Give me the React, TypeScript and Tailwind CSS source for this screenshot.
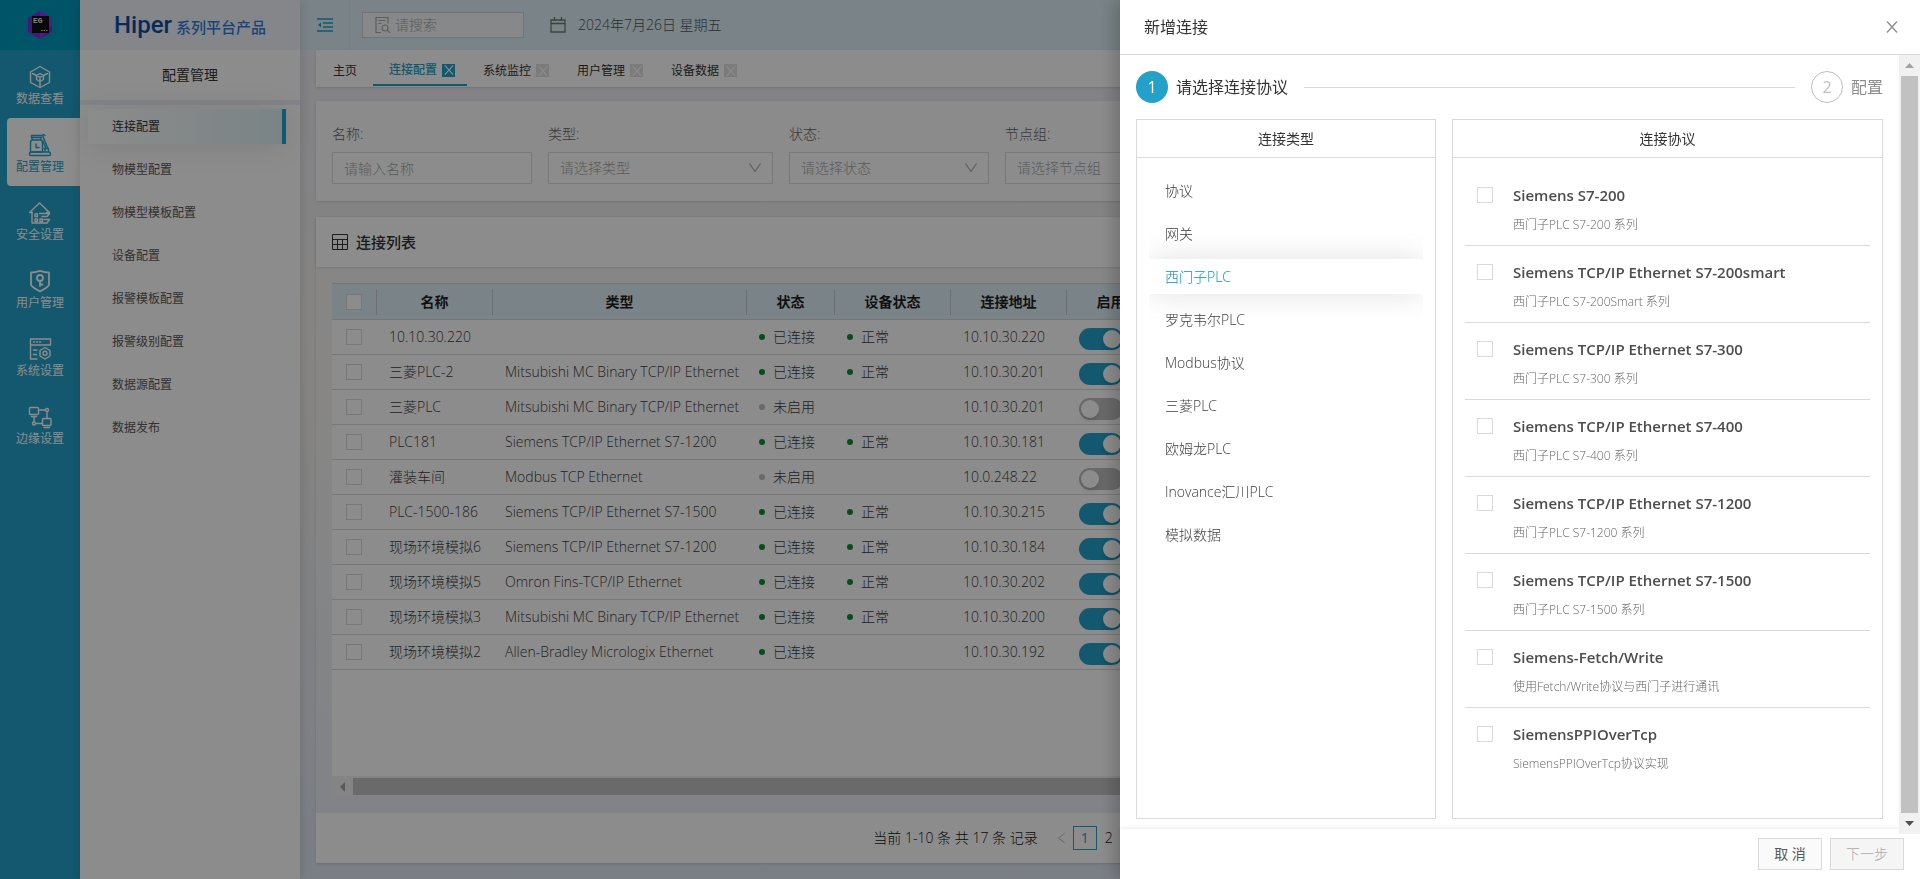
import type { ReactNode } from "react";

type Row = {
  name: string;
  type: string;
  status: string;
  device: string;
  address: string;
  enabled: boolean;
};

const rows: Row[] = [
  { name: "10.10.30.220", type: "", status: "已连接", device: "正常", address: "10.10.30.220", enabled: true },
  { name: "三菱PLC-2", type: "Mitsubishi MC Binary TCP/IP Ethernet", status: "已连接", device: "正常", address: "10.10.30.201", enabled: true },
  { name: "三菱PLC", type: "Mitsubishi MC Binary TCP/IP Ethernet", status: "未启用", device: "", address: "10.10.30.201", enabled: false },
  { name: "PLC181", type: "Siemens TCP/IP Ethernet S7-1200", status: "已连接", device: "正常", address: "10.10.30.181", enabled: true },
  { name: "灌装车间", type: "Modbus TCP Ethernet", status: "未启用", device: "", address: "10.0.248.22", enabled: false },
  { name: "PLC-1500-186", type: "Siemens TCP/IP Ethernet S7-1500", status: "已连接", device: "正常", address: "10.10.30.215", enabled: true },
  { name: "现场环境模拟6", type: "Siemens TCP/IP Ethernet S7-1200", status: "已连接", device: "正常", address: "10.10.30.184", enabled: true },
  { name: "现场环境模拟5", type: "Omron Fins-TCP/IP Ethernet", status: "已连接", device: "正常", address: "10.10.30.202", enabled: true },
  { name: "现场环境模拟3", type: "Mitsubishi MC Binary TCP/IP Ethernet", status: "已连接", device: "正常", address: "10.10.30.200", enabled: true },
  { name: "现场环境模拟2", type: "Allen-Bradley Micrologix Ethernet", status: "已连接", device: "", address: "10.10.30.192", enabled: true },
];

const menu = [
  "连接配置",
  "物模型配置",
  "物模型模板配置",
  "设备配置",
  "报警模板配置",
  "报警级别配置",
  "数据源配置",
  "数据发布",
];

const tabs = ["连接配置", "系统监控", "用户管理", "设备数据"];

const types = [
  "协议",
  "网关",
  "西门子PLC",
  "罗克韦尔PLC",
  "Modbus协议",
  "三菱PLC",
  "欧姆龙PLC",
  "Inovance汇川PLC",
  "模拟数据",
];

const protocols = [
  ["Siemens S7-200", "西门子PLC S7-200 系列"],
  ["Siemens TCP/IP Ethernet S7-200smart", "西门子PLC S7-200Smart 系列"],
  ["Siemens TCP/IP Ethernet S7-300", "西门子PLC S7-300 系列"],
  ["Siemens TCP/IP Ethernet S7-400", "西门子PLC S7-400 系列"],
  ["Siemens TCP/IP Ethernet S7-1200", "西门子PLC S7-1200 系列"],
  ["Siemens TCP/IP Ethernet S7-1500", "西门子PLC S7-1500 系列"],
  ["Siemens-Fetch/Write", "使用Fetch/Write协议与西门子进行通讯"],
  ["SiemensPPIOverTcp", "SiemensPPIOverTcp协议实现"],
];

function RailIcon({ children }: { children: ReactNode }) {
  return (
    <svg
      viewBox="0 0 24 24"
      className="size-6"
      fill="none"
      stroke="currentColor"
      strokeWidth="1.4"
      strokeLinejoin="round"
      strokeLinecap="round"
    >
      {children}
    </svg>
  );
}

const rail = [
  {
    label: "数据查看",
    icon: (
      <RailIcon>
        <path d="M12 1.500 21.500 7v10.500L12 22.500 2.500 17.500V7z" />
        <path d="M12 8.500 15.500 10.500v4L12 16.500 8.500 14.500v-4zM8.500 10.500 12 12.500l3.500-2M12 12.500v9.500M8.500 10.500 4.500 8.500M15.500 10.500l4-2" />
      </RailIcon>
    ),
  },
  {
    label: "配置管理",
    icon: (
      <RailIcon>
        <path d="M3.500 4.500V2.500h11l1-1 1.500 1M3.500 4.500h10M4 4.500v2.500M13 4.500V7M2.500 9.500C2.500 8 3 7 4.500 7h8c1.500 0 2 1 2 2.500V19h-12zM8 11v3.500h3" />
        <path d="M15 3.500 20.500 17v2M14.500 7.500l3 6.500M16 15.500h4.500M1.500 21c0-1.500.5-2 2-2h17c1.500 0 2 .5 2 2s-.5 1.500-1.500 1.500H3c-1 0-1.500 0-1.500-1.500zM17 16v2.500" />
      </RailIcon>
    ),
  },
  {
    label: "安全设置",
    icon: (
      <RailIcon>
        <path d="M4.500 11.500H1.500L11.500 2l10 9.500h-3M4 12v10h15l2.500-3.500h-5.500M11.500 12.500h10L19 15.500h-5" />
        <path d="M7 13h2.500v2.500H7zM7 18h2.500v2.500H7zM12 18h2.500v2.500H12z" />
      </RailIcon>
    ),
  },
  {
    label: "用户管理",
    icon: (
      <RailIcon>
        <path d="M12 1.800c3 1 6 1.700 9 1.700v12c0 2.500-5 4.500-9 7-4-2.500-9-4.500-9-7v-12c3 0 6-.7 9-1.700z" strokeWidth="1.800" />
        <circle cx="12" cy="9" r="3" strokeWidth="1.800" />
        <path d="M12 12v5M12 15.500h2.500" strokeWidth="1.800" />
      </RailIcon>
    ),
  },
  {
    label: "系统设置",
    icon: (
      <RailIcon>
        <path d="M9 22H2.500V2h20v6h-20M5.500 5h1M8.500 5h1M11.500 5h1M5.500 13h3.500M5.500 17.500h3" />
        <path d="m17 10.500 5 3v5.500l-5 3-5-3v-5.500z" />
        <circle cx="17" cy="16.200" r="2" />
      </RailIcon>
    ),
  },
  {
    label: "边缘设置",
    icon: (
      <RailIcon>
        <rect x="1.500" y="2.500" width="9" height="7" rx="1" />
        <rect x="14.500" y="13.500" width="8.500" height="7" rx="1" />
        <path d="M3.500 11.500h5M10.500 5h7M6 11.500V17M8 18.500h6.500M19 7v6.500M16 22.500h5.500" />
        <circle cx="19" cy="5" r="1.500" />
        <circle cx="6" cy="18.500" r="1.500" />
      </RailIcon>
    ),
  },
];

function Cross({ className }: { className: string }) {
  return (
    <svg viewBox="0 0 12 12" className={className} fill="none" stroke="currentColor" strokeWidth="1.300">
      <path d="M1 .5 11 11.500M11 .5 1 11.500" />
    </svg>
  );
}

function Check({ label }: { label: string }) {
  return (
    <input
      type="checkbox"
      aria-label={label}
      className="block size-4 shrink-0 appearance-none border border-[#d9d9d9] bg-white"
    />
  );
}

function Filter({ id, label, hint, width, select }: { id: string; label: string; hint: string; width: string; select?: boolean }) {
  const box = "h-8 w-full appearance-none border border-[#d9d9d9] bg-white px-[11px] text-sm outline-none";
  return (
    <div className={width}>
      <label htmlFor={id} className="mb-2 block text-sm leading-5 text-[#666]">
        {label}:
      </label>
      {select ? (
        <div className="relative">
          <select id={id} className={`${box} text-[#a6a6a6]`}>
            <option>{hint}</option>
          </select>
          <svg viewBox="0 0 12 10" className="absolute right-3 top-[11px] h-2.5 w-3 text-[#aaa]" fill="none" stroke="currentColor" strokeWidth="1.200">
            <path d="m.5.500 5.500 8L11.500.500" />
          </svg>
        </div>
      ) : (
        <input id={id} placeholder={hint} className={`${box} placeholder:text-[#a6a6a6]`} />
      )}
    </div>
  );
}

function Status({ text }: { text: string }) {
  if (!text) return null;
  return (
    <span className="flex items-center gap-2">
      <i className={`size-1.5 rounded-full ${text === "未启用" ? "bg-[#bfbfbf]" : "bg-[#128a32]"}`} />
      {text}
    </span>
  );
}

function Rail() {
  return (
    <nav className="flex w-20 shrink-0 flex-col bg-[#23a1c9] text-white">
      <div className="flex h-[50px] items-center justify-center bg-[#0099bd]">
        <svg viewBox="0 0 26 28" className="h-7 w-[26px]">
          <path d="M13 0 25 7v14l-12 7L1 21V7z" fill="#7d2be0" />
          <path d="M13 0 25 7v7L13 28z" fill="#9a35f2" />
          <rect x="5" y="5" width="17" height="17" fill="#111" />
          <text x="6" y="12" fontSize="8" fontWeight="700" fontFamily="Liberation Mono" fill="#eee">EG</text>
          <path d="M14 19.500h1.500M16.500 19.500H18M19 19.500h1.500" stroke="#ddd" />
        </svg>
      </div>
      {rail.map((item, i) => (
        <a
          key={item.label}
          href="#"
          className={
            i === 1
              ? "ml-[7px] flex h-[68px] flex-col items-center rounded-l bg-white pr-[7px] pt-[15px] text-[#23a1c9]"
              : "flex h-[68px] flex-col items-center pt-[15px]"
          }
        >
          {item.icon}
          <span className="mt-0.5 text-xs font-normal leading-4">{item.label}</span>
        </a>
      ))}
    </nav>
  );
}

function Sidebar() {
  return (
    <aside className="z-10 flex w-[220px] shrink-0 flex-col bg-white shadow-[0_0_10px_rgba(0,0,0,0.15)]">
      <div className="flex h-[50px] items-center justify-center gap-1 bg-[#f1f4fc]">
        <span className="font-['Roboto',sans-serif] text-2xl font-medium text-[#0c4fa0]">Hiper</span>
        <span className="pt-1 text-[15px] font-medium text-[#2f7ddb]">系列平台产品</span>
      </div>
      <h2 className="border-b-[5px] border-[#eef0f7] pb-3.5 pt-[13px] text-center text-sm font-normal leading-[23px] text-[#333]">
        配置管理
      </h2>
      <ul className="mt-1 space-y-2 pl-2 pr-3.5 text-xs font-normal">
        {menu.map((item, i) => (
          <li key={item}>
            <a
              href="#"
              className={
                i === 0
                  ? "flex h-[35px] items-center border-r-4 border-[#23a1c9] bg-linear-to-r from-white to-[#dff0f4] pl-6 text-[#333] shadow-[0_2px_30px_rgba(0,0,0,0.1)]"
                  : "flex h-[35px] items-center pl-6 text-[#595959]"
              }
            >
              {item}
            </a>
          </li>
        ))}
      </ul>
    </aside>
  );
}

function TopBar() {
  return (
    <header className="flex h-[50px] shrink-0 items-center bg-[#deeef6]">
      <button aria-label="收起菜单" className="flex h-full w-[50px] items-center border-r border-[#d3ecf0] pl-[17px] text-[#23a1c9]">
        <svg viewBox="0 0 16 14" className="h-3.5 w-4" fill="none" stroke="currentColor" strokeWidth="1.300">
          <path d="M0 1h16M6 5h10M6 9h10M0 13h16" />
          <path d="M4 4.500v5L1 7z" fill="currentColor" stroke="none" />
        </svg>
      </button>
      <label className="ml-3 flex h-[26px] w-[162px] items-center gap-1 border border-[#d0d5d9] bg-[#f6f8f9] pl-3 text-[#aaa]">
        <svg viewBox="0 0 16 16" className="size-4 shrink-0" fill="none" stroke="currentColor" strokeWidth="1.200">
          <path d="M6 15.500H1V.5h12v6M3.500 3.500h7M3.500 6.500h3" />
          <circle cx="10" cy="11" r="3" />
          <path d="m12.500 13.500 2.500 2.500" />
        </svg>
        <input placeholder="请搜索" aria-label="请搜索" className="w-full min-w-0 bg-transparent text-sm outline-none placeholder:text-[#a6a6a6]" />
      </label>
      <svg viewBox="0 0 16 16" className="ml-[26px] size-4 text-[#777]" fill="none" stroke="currentColor" strokeWidth="1.300">
        <path d="M1 3h14v12H1zM1 6.500h14M4.500 0v4M11.500 0v4" />
      </svg>
      <span className="ml-3 text-sm text-[#4d565b]">2024年7月26日 星期五</span>
    </header>
  );
}

function Tabs() {
  return (
    <nav className="flex h-[37px] shrink-0 bg-white text-xs font-normal text-[#333] shadow-sm">
      <a href="#" className="flex w-[57px] items-center pl-[17px] pt-1">
        主页
      </a>
      {tabs.map((tab, i) => (
        <div
          key={tab}
          className={
            i === 0
              ? "mb-px flex w-[94px] items-center gap-[5px] border-b-2 border-[#23a1c9] pl-4 pt-1.5 font-medium text-[#23a1c9]"
              : "flex w-[94px] items-center gap-[5px] pl-4 pt-1"
          }
        >
          <a href="#">{tab}</a>
          <button
            aria-label={`关闭${tab}`}
            className={
              i === 0
                ? "flex size-[13px] items-center justify-center bg-[#23a1c9] text-white"
                : "flex size-[13px] items-center justify-center bg-[#e0e0e0] text-white"
            }
          >
            <Cross className="size-2.5" />
          </button>
        </div>
      ))}
    </nav>
  );
}

function ConnectionTable() {
  const cols = ["名称", "类型", "状态", "设备状态", "连接地址", "启用"];
  return (
    <div className="flex min-h-0 flex-1 flex-col bg-white">
      <div className="min-h-0 flex-1 overflow-hidden">
        <table className="w-full table-fixed border-collapse text-sm text-[#3d3d3d]">
          <colgroup>
            <col className="w-[45px]" />
            <col className="w-[116px]" />
            <col className="w-[254px]" />
            <col className="w-[88px]" />
            <col className="w-[116px]" />
            <col className="w-[116px]" />
            <col className="w-[88px]" />
            <col />
          </colgroup>
          <thead>
            <tr className="h-9 border-y border-[#d0d7dc] bg-[#deeef6] text-[#1f1f1f]">
              <th className="p-0">
                <div className="flex h-[26px] items-center border-r border-[#c3ccd1] pl-3.5">
                  <Check label="全选" />
                </div>
              </th>
              {cols.map((col) => (
                <th key={col} className="p-0">
                  <div className="border-r border-[#c3ccd1] text-sm font-bold leading-[26px]">{col}</div>
                </th>
              ))}
              <th className="p-0" />
            </tr>
          </thead>
          <tbody>
            {rows.map((row) => (
              <tr key={row.name} className="h-[35px] border-b border-[#d9d9d9]">
                <td className="p-0 pl-3.5">
                  <Check label={row.name} />
                </td>
                <td className="whitespace-nowrap p-0 pl-3">{row.name}</td>
                <td className="whitespace-nowrap p-0 pl-3">{row.type}</td>
                <td className="p-0 pl-3">
                  <Status text={row.status} />
                </td>
                <td className="p-0 pl-3">
                  <Status text={row.device} />
                </td>
                <td className="p-0 pl-3">{row.address}</td>
                <td className="p-0 pl-3 pt-1">
                  <input
                    type="checkbox"
                    role="switch"
                    aria-label={`启用${row.name}`}
                    defaultChecked={row.enabled}
                    className="block h-[22px] w-11 appearance-none rounded-full bg-[#bfbfbf] p-0.5 before:block before:size-[18px] before:rounded-full before:bg-white before:shadow-md checked:bg-[#23a1c9] checked:before:ml-[22px]"
                  />
                </td>
                <td className="p-0" />
              </tr>
            ))}
          </tbody>
        </table>
      </div>
      <div className="flex h-[21px] items-center bg-[#f1f1f1]">
        <svg viewBox="0 0 5 10" className="ml-2 mr-2 h-2.5 w-[5px]" fill="#a3a3a3">
          <path d="M5 0v10L0 5z" />
        </svg>
        <div className="mr-[21px] h-[17px] flex-1 bg-[#c1c1c1]" />
      </div>
    </div>
  );
}

function Main() {
  return (
    <div className="flex min-w-0 flex-1 flex-col bg-linear-to-b from-[#ecedf8] via-[#f4f1ec] via-40% to-[#dfe6f3]">
      <TopBar />
      <main className="flex min-h-0 flex-1 flex-col pb-4 pl-4">
        <Tabs />
        <section className="mt-3.5 flex h-[100px] shrink-0 gap-4 bg-white/90 px-4 pt-[23px] shadow-sm">
          <Filter id="name" label="名称" hint="请输入名称" width="w-[200px]" />
          <Filter id="type" label="类型" hint="请选择类型" width="w-[225px]" select />
          <Filter id="status" label="状态" hint="请选择状态" width="w-[200px]" select />
          <Filter id="group" label="节点组" hint="请选择节点组" width="w-[200px]" select />
        </section>
        <section className="mt-4 flex min-h-0 flex-1 flex-col shadow-sm">
          <h3 className="flex h-[50px] shrink-0 items-center gap-2 bg-white px-4 text-[15px] font-medium text-[#333] shadow-sm">
            <svg viewBox="0 0 16 16" className="size-4" fill="none" stroke="currentColor">
              <path d="M.5.500h15v15H.5zM.5 5.500h15M.5 10.500h15M5.500 5.500v10M10.500 5.500v10" />
            </svg>
            连接列表
          </h3>
          <div className="flex min-h-0 flex-1 flex-col bg-white/30 p-4">
            <ConnectionTable />
          </div>
          <div className="flex h-[50px] shrink-0 items-center justify-center bg-white text-sm text-[#111]">
            <span className="mr-4">当前 1-10 条 共 17 条 记录</span>
            <svg viewBox="0 0 7 10" className="mx-1 h-2.5 w-[7px] text-[#bbb]" fill="none" stroke="currentColor">
              <path d="M6.500.500.500 5l6 4.500" />
            </svg>
            <button className="ml-1 size-6 border border-[#23a1c9] font-normal text-[#23a1c9]">1</button>
            <button className="size-6">2</button>
            <select aria-label="每页条数" className="ml-4 h-6 w-[226px] border border-[#d9d9d9]">
              <option>10 条/页</option>
            </select>
          </div>
        </section>
      </main>
    </div>
  );
}

function Panel({ title, className, children }: { title: string; className: string; children: ReactNode }) {
  return (
    <section className={`min-h-[700px] border border-[#d9d9d9] ${className}`}>
      <h4 className="border-b border-[#d9d9d9] py-2 text-center text-sm font-normal leading-[21px] text-[#333]">{title}</h4>
      {children}
    </section>
  );
}

function Drawer() {
  return (
    <aside className="fixed inset-y-0 right-0 flex w-[800px] flex-col bg-white shadow-[-6px_0_16px_rgba(0,0,0,0.2)]">
      <header className="flex h-[55px] shrink-0 items-center justify-between border-b border-[#d9d9d9] pl-6 pr-[22px]">
        <h3 className="text-base font-normal text-[#333]">新增连接</h3>
        <button aria-label="关闭" className="text-[#8c8c8c]">
          <Cross className="size-3" />
        </button>
      </header>
      <div className="flex min-h-0 flex-1">
        <div className="min-w-0 flex-1 overflow-hidden px-4 pt-4">
          <div className="flex h-8 items-center font-normal">
            <span className="flex size-8 items-center justify-center rounded-full bg-[#23a1c9] text-base text-white">1</span>
            <span className="ml-2 text-base text-[#333]">请选择连接协议</span>
            <div className="mx-4 h-px flex-1 bg-[#d9d9d9]" />
            <span className="flex size-8 items-center justify-center rounded-full border border-[#bfbfbf] text-base text-[#bfbfbf]">2</span>
            <span className="ml-2 text-base text-[#8c8c8c]">配置</span>
          </div>
          <div className="mt-4 flex gap-4">
            <Panel title="连接类型" className="w-[300px]">
              <ul className="mx-3 space-y-2 overflow-hidden pt-[15px] text-sm">
                {types.map((type) => (
                  <li key={type}>
                    <a
                      href="#"
                      className={
                        type === "西门子PLC"
                          ? "flex h-[35px] items-center bg-white pl-4 text-[#0b8fba] shadow-[0_0_30px_rgba(0,0,0,0.12)]"
                          : "flex h-[35px] items-center pl-4 text-[#3d3d3d]"
                      }
                    >
                      {type}
                    </a>
                  </li>
                ))}
              </ul>
            </Panel>
            <Panel title="连接协议" className="flex-1">
              <ul className="mx-3 pt-[11px]">
                {protocols.map(([name, desc]) => (
                  <li key={name} className="border-b border-[#d9d9d9] last:border-0">
                    <label className="flex gap-5 pb-3 pl-3 pt-[15px]">
                      <span className="pt-[3px]">
                        <Check label={name} />
                      </span>
                      <span>
                        <span className="block text-[15px] font-semibold leading-[22px] text-[#4d4d4d]">{name}</span>
                        <span className="mt-[11px] block text-xs leading-4 text-[#666]">{desc}</span>
                      </span>
                    </label>
                  </li>
                ))}
              </ul>
            </Panel>
          </div>
        </div>
        <div className="z-10 -mb-[5px] flex w-[21px] shrink-0 flex-col items-center justify-between bg-[#f1f1f1]">
          <svg viewBox="0 0 9 5" className="my-2 h-[5px] w-[9px] shrink-0" fill="#a3a3a3">
            <path d="M0 5h9L4.500 0z" />
          </svg>
          <div className="w-[17px] flex-1 bg-[#c1c1c1]" />
          <svg viewBox="0 0 9 5" className="my-2 h-[5px] w-[9px] shrink-0" fill="#505050">
            <path d="M0 0h9L4.500 5z" />
          </svg>
        </div>
      </div>
      <footer className="flex h-[50px] shrink-0 items-center justify-end gap-2 bg-white pr-4 text-sm shadow-[0_-1px_4px_rgba(0,0,0,0.08)]">
        <button className="h-8 w-16 border border-[#d9d9d9] bg-[#fafafa] font-normal text-[#595959]">取 消</button>
        <button disabled className="h-8 w-[74px] border border-[#d9d9d9] bg-[#f5f5f5] text-[#aaa]">下一步</button>
      </footer>
    </aside>
  );
}

export default function App() {
  return (
    <div className="flex h-screen overflow-hidden font-['Open_Sans','Noto_Sans_CJK_SC',sans-serif] font-light">
      <Rail />
      <Sidebar />
      <Main />
      <div className="fixed inset-0 z-20 bg-black/45">
        <Drawer />
      </div>
    </div>
  );
}
